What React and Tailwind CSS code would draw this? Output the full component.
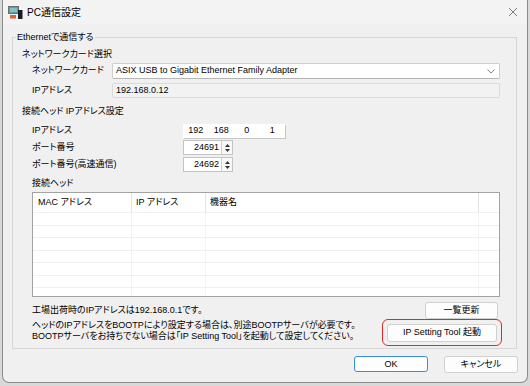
import React from 'react';

function PcIcon() {
  return (
    <svg width="15" height="13" viewBox="0 0 15 13">
      <rect x="0.5" y="0.5" width="10" height="7" fill="#4f9cc4" stroke="#6f6f6f" />
      <rect x="2" y="2" width="7" height="4" fill="#7fc4b8" />
      <rect x="2" y="9" width="6" height="3.5" fill="#e0632c" />
      <rect x="10" y="4" width="4.5" height="9" fill="#1c1c1c" />
    </svg>
  );
}

function Spin({ value }) {
  return (
    <div className="w-[50px] h-[15px] bg-white border border-[#c4c4c4] flex items-center">
      <div className="flex-1 text-right pr-[2px] leading-[13px]">{value}</div>
      <div className="w-[11px] h-[13px] border-l border-[#d0d0d0] flex flex-col items-center justify-center gap-[2px] bg-[#f7f7f7]">
        <svg width="5" height="3" viewBox="0 0 5 3"><path d="M0 3 L2.5 0 L5 3 Z" fill="#333" /></svg>
        <svg width="5" height="3" viewBox="0 0 5 3"><path d="M0 0 L2.5 3 L5 0 Z" fill="#333" /></svg>
      </div>
    </div>
  );
}

function Btn({ children, className = '' }) {
  return (
    <div className={`h-[17px] bg-[#fdfdfd] border border-[#d0d0d0] rounded-[3px] flex items-center justify-center leading-none ${className}`}>
      {children}
    </div>
  );
}

export default function App() {
  const rows = [0, 1, 2, 3, 4, 5, 6];
  return (
    <div className="w-[530px] h-[386px] bg-[#d9d9d9] overflow-hidden text-[9px] text-black font-['Liberation_Sans','Noto_Sans_CJK_JP',sans-serif] [font-feature-settings:'palt']">
      <div className="ml-[2px] w-[526px] h-[383px] bg-[#f0f0f0] border border-t-0 border-[#8c8c8c] rounded-b-[7px] flex flex-col">
        {/* title bar */}
        <div className="h-[24px] bg-[#f3f3f3] flex items-center pl-[5px] pr-[5px]">
          <PcIcon />
          <span className="ml-[4px] text-[10px]">PC通信設定</span>
          <div className="flex-1" />
          <svg width="10" height="10" viewBox="0 0 10 10" className="mr-[4px]">
            <path d="M1 1 L9 9 M9 1 L1 9" stroke="#707070" strokeWidth="0.9" />
          </svg>
        </div>

        <fieldset className="mt-[7px] ml-[9px] mr-[10px] border border-[#d6d6d6] pb-[2px]">
          <legend className="ml-[3px] px-[1px] leading-[12px]">Ethernetで通信する</legend>
          <div className="pl-[9px] mt-[5px] h-[12px] leading-[12px]">ネットワークカード選択</div>
          <div className="pl-[19px] pr-[16px]">
            <div className="mt-[3px] h-[16px] flex items-center">
              <div className="w-[80px]">ネットワークカード</div>
              <div className="flex-1 h-[16px] bg-white border border-[#cfcfcf] border-b-[#b5b5b5] rounded-[2px] flex items-center pl-[3px] pr-[4px]">
                <span className="flex-1">ASIX USB to Gigabit Ethernet Family Adapter</span>
                <svg width="8" height="5" viewBox="0 0 8 5"><path d="M0.5 0.5 L4 4 L7.5 0.5" fill="none" stroke="#777" strokeWidth="0.9" /></svg>
              </div>
            </div>
            <div className="mt-[4px] h-[15px] flex items-center">
              <div className="w-[80px]">IPアドレス</div>
              <div className="flex-1 h-[15px] bg-[#f2f2f2] border border-[#dadada] rounded-[2px] flex items-center pl-[3px]">192.168.0.12</div>
            </div>
          </div>
          <div className="pl-[9px] mt-[7px] h-[12px] leading-[12px]">接続ヘッド IPアドレス設定</div>
          <div className="pl-[19px] pr-[16px]">
            <div className="mt-[7px] h-[14px] flex items-center">
              <div className="w-[151px]">IPアドレス</div>
              <div className="w-[102px] h-[14px] bg-white shadow-[1px_1px_0_#c8c8c8] grid grid-cols-4 items-center text-center">
                <span>192</span><span>168</span><span>0</span><span>1</span>
              </div>
            </div>
            <div className="mt-[2px] h-[15px] flex items-center">
              <div className="w-[151px]">ポート番号</div>
              <Spin value="24691" />
            </div>
            <div className="mt-[2px] h-[15px] flex items-center">
              <div className="w-[151px]">ポート番号(高速通信)</div>
              <Spin value="24692" />
            </div>
            <div className="mt-[5px] h-[12px] leading-[12px]">接続ヘッド</div>
            <div className="mt-[3px] h-[105px] bg-white border border-[#a3a3a3] overflow-hidden">
              <div className="h-[19px] flex">
                <div className="w-[99px] border-r border-[#e3e3e3] pl-[5px] flex items-center">MAC アドレス</div>
                <div className="w-[74px] border-r border-[#e3e3e3] pl-[4px] flex items-center">IP アドレス</div>
                <div className="w-[273px] border-r border-[#e3e3e3] pl-[4px] flex items-center">機器名</div>
                <div className="flex-1" />
              </div>
              {rows.map((r) => (
                <div key={r} className="h-[12.5px] flex border-t border-[#f0f0f0]">
                  <div className="w-[99px] border-r border-[#f3f3f3]" />
                  <div className="w-[74px] border-r border-[#f3f3f3]" />
                  <div className="w-[273px] border-r border-[#f3f3f3]" />
                  <div className="flex-1" />
                </div>
              ))}
            </div>
            <div className="mt-[5px] h-[17px] flex items-center">
              <div className="flex-1">工場出荷時のIPアドレスは192.168.0.1です。</div>
              <Btn className="w-[73px] mr-[2px]">一覧更新</Btn>
            </div>
            <div className="h-[27px] flex items-start">
              <div className="flex-1 leading-[10.5px] pt-[1px]">
                <div>ヘッドのIPアドレスをBOOTPにより設定する場合は、別途BOOTPサーバが必要です。</div>
                <div>BOOTPサーバをお持ちでない場合は「IP Setting Tool」を起動して設定してください。</div>
              </div>
              <div className="mr-[-2px] w-[120px] h-[27px] border-[1.5px] border-[#e02828] rounded-[6px] flex items-center justify-center">
                <Btn className="w-[110px] h-[18px]">IP Setting Tool 起動</Btn>
              </div>
            </div>
          </div>
        </fieldset>

        <div className="mt-[7px] mr-[9px] flex justify-end gap-[16px]">
          <div className="w-[74px] h-[16px] bg-[#fdfdfd] border border-[#3b8de0] rounded-[3px] flex items-center justify-center leading-none">OK</div>
          <Btn className="w-[74px] h-[16px]">キャンセル</Btn>
        </div>
      </div>
    </div>
  );
}
